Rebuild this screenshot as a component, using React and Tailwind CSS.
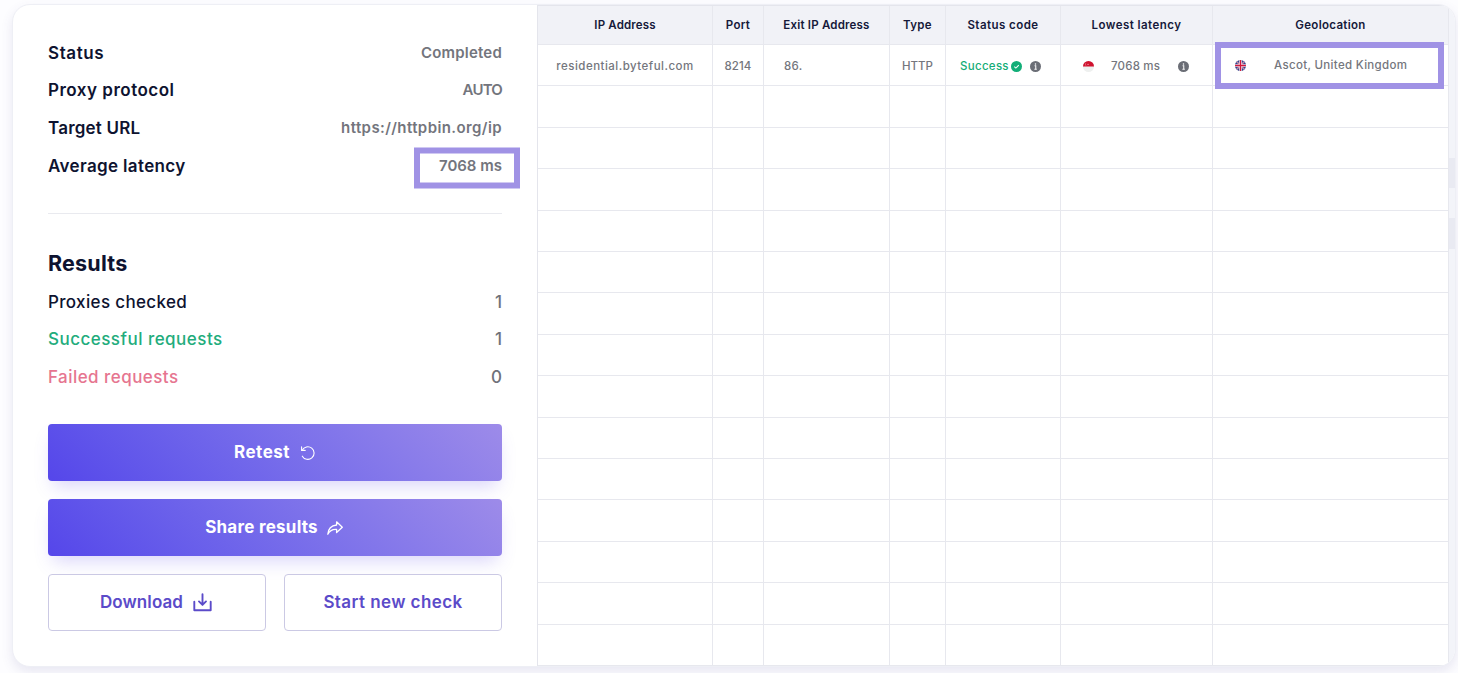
const details = [
  { label: "Status", value: "Completed", labelClass: "tracking-[0.6px]", valueClass: "tracking-[0.2px]" },
  { label: "Proxy protocol", value: "AUTO", labelClass: "tracking-[0.5px]", valueClass: "tracking-[-0.8px]" },
  { label: "Target URL", value: "https://httpbin.org/ip", labelClass: "tracking-[0.2px]", valueClass: "tracking-[0.4px]" },
  { label: "Average latency", value: "7068 ms", labelClass: "tracking-[0.35px]", valueClass: "tracking-[0px]", highlight: true },
];

const results = [
  { label: "Proxies checked", value: 1, className: "text-[#0e1330] tracking-[0.35px]" },
  { label: "Successful requests", value: 1, className: "text-[#22ac7c] tracking-[0.48px]" },
  { label: "Failed requests", value: 0, className: "text-[#e67590] tracking-[0.45px]" },
];

const columns = [
  { name: "IP Address", className: "tracking-[0.15px]" },
  { name: "Port", className: "tracking-[0.3px]" },
  { name: "Exit IP Address", className: "tracking-[0.2px]" },
  { name: "Type", className: "tracking-[0.3px]" },
  { name: "Status code", className: "tracking-[0.45px]" },
  { name: "Lowest latency", className: "tracking-[0.45px]" },
  { name: "Geolocation", className: "tracking-[0.3px]" },
];

const gridCols = "grid grid-cols-[175px_51px_126px_56px_115px_152px_236px]";

const RetestIcon = () => (
  <svg className="mt-px w-4 h-4 shrink-0" viewBox="0 0 16 16" fill="none" stroke="currentColor" strokeWidth="1.1" strokeLinecap="round" strokeLinejoin="round">
    <path d="M2.2 5.2A6.3 6.3 0 1 1 2.3 11.2" />
    <path d="M1.6 1.9V5.4H5.2" />
  </svg>
);

const ShareIcon = () => (
  <svg className="w-4 h-4 shrink-0" viewBox="0 0 16 16" fill="none" stroke="currentColor" strokeWidth="1.3" strokeLinejoin="round">
    <path d="M9.6 1.8L15.3 7.3L9.6 12.6V9.5C6 9.2 2.7 10.8.8 14.3C1.2 9.4 4.3 5.6 9.6 5Z" />
  </svg>
);

const DownloadIcon = () => (
  <svg className="w-[19px] h-[19px] shrink-0" viewBox="0 0 19 19" fill="none" stroke="currentColor" strokeWidth="1.9" strokeLinecap="round" strokeLinejoin="round">
    <path d="M9.5 1.2V11.6M6 8.4L9.5 11.9L13 8.4" />
    <path d="M1.3 8.8V17.3H17.7V8.8" />
  </svg>
);

const InfoIcon = () => (
  <svg className="w-[11px] h-[11px] shrink-0" viewBox="0 0 12 12">
    <circle cx="6" cy="6" r="6" fill="#6b6e76" />
    <circle cx="6" cy="3.2" r="0.85" fill="#fff" />
    <path d="M5 5.2H6.3V8.9M4.8 9H7.4" stroke="#fff" strokeWidth="1.1" fill="none" />
  </svg>
);

const CheckIcon = () => (
  <svg className="w-[11px] h-[11px] shrink-0" viewBox="0 0 12 12">
    <circle cx="6" cy="6" r="6" fill="#12ae78" />
    <path d="M3.6 6.2L5.3 7.8L8.5 4.4" stroke="#fff" strokeWidth="1.1" fill="none" />
  </svg>
);

const SingaporeFlag = () => (
  <svg className="w-[11px] h-[11px] shrink-0" viewBox="0 0 12 12">
    <circle cx="6" cy="6" r="6" fill="#eef0ef" />
    <path d="M0 6A6 6 0 0 1 12 6Z" fill="#d0122f" />
    <path d="M3.6 1.9A1.9 1.9 0 0 0 3.6 5.2A2.6 2.6 0 0 1 3.6 1.9" fill="#fff" />
    <circle cx="5.5" cy="3.6" r="0.7" fill="#fff" opacity="0.7" />
  </svg>
);

const UkFlag = () => (
  <svg className="w-[11px] h-[11px] shrink-0" viewBox="0 0 12 12">
    <clipPath id="uk">
      <circle cx="6" cy="6" r="6" />
    </clipPath>
    <g clipPath="url(#uk)">
      <rect width="12" height="12" fill="#35438c" />
      <path d="M0 0L12 12M12 0L0 12" stroke="#e9e6f0" strokeWidth="1.3" />
      <path d="M0 0L12 12M12 0L0 12" stroke="#d5304f" strokeWidth="0.6" />
      <path d="M6 0V12M0 6H12" stroke="#fff" strokeWidth="2.8" />
      <path d="M6 0V12M0 6H12" stroke="#d0173c" strokeWidth="1.5" />
    </g>
  </svg>
);

const Cell = ({ className = "", children }) => (
  <div className={`relative flex items-center border-r border-b border-[#e7e8ee] ${className}`}>{children}</div>
);

const Summary = () => (
  <div className="w-[524px] shrink-0 pl-[35px] pr-[35px] pt-[29px]">
    {details.map((item) => (
      <div key={item.label} className="flex h-[37.75px] items-center justify-between">
        <span className={`pt-px text-[17px] font-semibold text-[#0e1330] ${item.labelClass}`}>{item.label}</span>
        <span className={`relative text-[15px] font-semibold text-[#73757d] ${item.valueClass}`}>
          {item.value}
          {item.highlight && (
            <span className="absolute -right-[18px] top-[calc(50%+2px)] h-[41px] w-[106px] -translate-y-1/2 border-[6px] border-[#a092e5]" />
          )}
        </span>
      </div>
    ))}

    <div className="mt-[28px] border-t border-[#e9eaef] pt-[31px]">
      <h2 className="flex h-[38px] items-center pb-[2px] text-[21.5px] font-bold tracking-[0.2px] text-[#0e1330]">Results</h2>
      {results.map((item) => (
        <div key={item.label} className="flex h-[37.7px] items-center justify-between pt-px text-[17px] font-medium">
          <span className={item.className}>{item.label}</span>
          <span className="text-[#6f727a]">{item.value}</span>
        </div>
      ))}
    </div>

    {/* Actions */}
    <div className="mt-[28px] grid grid-cols-2 gap-[18px] text-[17px]">
      <button className="col-span-2 flex h-[57px] items-center justify-center gap-[10px] rounded bg-linear-45 from-[#5546ea] to-[#9d8be9] font-bold text-white shadow-[0_10px_18px_-5px_rgba(110,90,235,0.26)]">
        <span className="tracking-[0.5px]">Retest</span>
        <RetestIcon />
      </button>
      <button className="col-span-2 flex h-[57px] items-center justify-center gap-[9px] rounded bg-linear-45 from-[#5546ea] to-[#9d8be9] pr-[2px] font-bold text-white shadow-[0_10px_18px_-5px_rgba(110,90,235,0.26)]">
        <span className="tracking-[0.25px]">Share results</span>
        <ShareIcon />
      </button>
      <button className="flex h-[57px] items-center justify-center gap-[10px] rounded border border-[#cbc9e4] bg-white pr-[2px] font-semibold text-[#5b4bc9]">
        <span className="tracking-[0.1px]">Download</span>
        <DownloadIcon />
      </button>
      <button className="flex h-[57px] items-center justify-center rounded border border-[#cbc9e4] bg-white font-semibold text-[#5b4bc9]">
        <span className="tracking-[0.42px]">Start new check</span>
      </button>
    </div>
  </div>
);

const ResultsTable = () => (
  <div className="w-[912px] shrink-0 border-t border-l border-[#e4e5ec] text-[11.5px] font-medium text-[#74767d]">
    <div className={`${gridCols} h-[39px]`}>
      {columns.map((col) => (
        <Cell key={col.name} className="justify-center bg-[#f1f2f7] pt-[2px]">
          <span className={`font-semibold text-[#15193a] ${col.className}`}>{col.name}</span>
        </Cell>
      ))}
    </div>
    <div className={`${gridCols} h-[41.4px]`}>
      <Cell className="justify-center pt-[2px]"><span className="tracking-[0.48px]">residential.byteful.com</span></Cell>
      <Cell className="justify-center pt-[2px]"><span className="tracking-[0.1px]">8214</span></Cell>
      <Cell className="pl-5 pt-[2px]"><span className="tracking-[0.3px]">86.</span></Cell>
      <Cell className="justify-center pt-[2px]"><span className="tracking-[0px]">HTTP</span></Cell>
      <Cell className="pl-[14px] pt-[2px]">
        <span className="w-[51px] text-[#14ad77] tracking-[0.3px]">Success</span>
        <CheckIcon />
        <span className="ml-[8px] flex"><InfoIcon /></span>
      </Cell>
      <Cell className="pl-[22px] pt-[2px]">
        <SingaporeFlag />
        <span className="ml-[17px] w-[67px] tracking-[0.2px]">7068 ms</span>
        <InfoIcon />
      </Cell>
      <Cell className="pl-[22px]">
        <UkFlag />
        <span className="ml-[28px] tracking-[0.32px]">Ascot, United Kingdom</span>
        <span className="absolute -top-[3px] left-[2px] h-[47px] w-[229px] border-[6px] border-[#a092e5]" />
      </Cell>
    </div>
    {Array.from({ length: 14 }).map((_, row) => (
      <div key={row} className={`${gridCols} h-[41.42px]`}>
        {columns.map((col) => (
          <Cell key={col.name} />
        ))}
      </div>
    ))}
  </div>
);

export default function App() {
  return (
    <div className="h-[673px] overflow-hidden bg-[#fdfdff] pl-3 pt-[4px] font-['Inter',sans-serif]">
      <div className="flex h-[663px] w-[1444px] overflow-hidden rounded-[18px] border border-[#eeeff5] bg-white shadow-[0_5px_12px_rgba(80,70,150,0.12)]">
        <Summary />
        <ResultsTable />
        {/* Scrollbar */}
        <div className="flex-1 bg-[#f3f4f9] pt-[153px]">
          <div className="h-[30px] bg-[#e9eaf2]" />
          <div className="mt-[30px] h-[31px] bg-[#e9eaf2]" />
        </div>
      </div>
    </div>
  );
}
